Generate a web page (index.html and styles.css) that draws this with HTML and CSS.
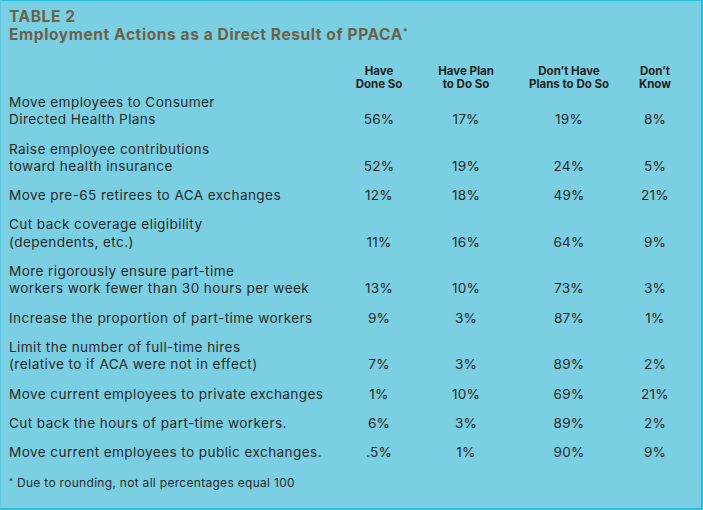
FILE: index.html
```html
<!DOCTYPE html>
<html>
<head>
<meta charset="utf-8">
<link rel="stylesheet" href="styles.css">
</head>
<body>
<div class="panel">
  <div class="title">
    <div class="kicker">TABLE 2</div>
    <div class="heading">Employment Actions as a Direct Result of PPACA<sup>*</sup></div>
  </div>
  <div class="table">
    <div class="hd"></div>
    <div class="hd">Have<br>Done So</div>
    <div class="hd">Have Plan<br>to Do So</div>
    <div class="hd">Don’t Have<br>Plans to Do So</div>
    <div class="hd">Don’t<br>Know</div>

    <div class="lbl">Move employees to Consumer<br>Directed Health Plans</div>
    <div class="val">56%</div><div class="val">17%</div><div class="val">19%</div><div class="val">8%</div>

    <div class="lbl">Raise employee contributions<br>toward health insurance</div>
    <div class="val">52%</div><div class="val">19%</div><div class="val">24%</div><div class="val">5%</div>

    <div class="lbl">Move pre-65 retirees to ACA exchanges</div>
    <div class="val">12%</div><div class="val">18%</div><div class="val">49%</div><div class="val">21%</div>

    <div class="lbl">Cut back coverage eligibility<br>(dependents, etc.)</div>
    <div class="val">11%</div><div class="val">16%</div><div class="val">64%</div><div class="val">9%</div>

    <div class="lbl">More rigorously ensure part-time<br>workers work fewer than 30 hours per week</div>
    <div class="val">13%</div><div class="val">10%</div><div class="val">73%</div><div class="val">3%</div>

    <div class="lbl">Increase the proportion of part-time workers</div>
    <div class="val">9%</div><div class="val">3%</div><div class="val">87%</div><div class="val">1%</div>

    <div class="lbl">Limit the number of full-time hires<br>(relative to if ACA were not in effect)</div>
    <div class="val">7%</div><div class="val">3%</div><div class="val">89%</div><div class="val">2%</div>

    <div class="lbl">Move current employees to private exchanges</div>
    <div class="val">1%</div><div class="val">10%</div><div class="val">69%</div><div class="val">21%</div>

    <div class="lbl">Cut back the hours of part-time workers.</div>
    <div class="val">6%</div><div class="val">3%</div><div class="val">89%</div><div class="val">2%</div>

    <div class="lbl">Move current employees to public exchanges.</div>
    <div class="val">.5%</div><div class="val">1%</div><div class="val">90%</div><div class="val">9%</div>
  </div>
  <div class="note"><sup>*</sup> Due to rounding, not all percentages equal 100</div>
</div>
</body>
</html>
```

FILE: styles.css
```css
html, body {
  margin: 0;
  padding: 0;
  background: #7bcfe3;
}
.panel {
  box-sizing: border-box;
  width: 703px;
  height: 510px;
  background: #7bcfe3;
  border-top: 1px solid #26bfdb;
  border-right: 2px solid #26bfdb;
  border-bottom: 2px solid #26bfdb;
  border-left: 1px solid #5fc8e0;
  padding: 7px 0 0 8px;
  font-family: Inter, "Open Sans", sans-serif;
  color: #2a2a2a;
}
.title {
  color: #6b6148;
  font-weight: 700;
  font-size: 15.5px;
  line-height: 18px;
  letter-spacing: 0.6px;
}
.title sup {
  font-size: 9px;
  vertical-align: 5px;
  line-height: 0;
}
.table {
  display: grid;
  grid-template-columns: 331px 78px 96px 110px 62px;
  align-items: end;
  margin-top: 21px;
}
.hd {
  font-size: 11.5px;
  font-weight: 700;
  line-height: 13px;
  text-align: center;
  color: #231f20;
}
.lbl, .val {
  font-size: 13.6px;
  line-height: 17.3px;
  padding: 3px 0 9px;
  letter-spacing: 0.4px;
}
.val {
  text-align: center;
  letter-spacing: 0.2px;
}
.note {
  font-size: 12px;
  letter-spacing: 0.3px;
  margin-top: 5px;
}
.note sup {
  font-size: 8px;
  vertical-align: 3px;
  line-height: 0;
}
```
